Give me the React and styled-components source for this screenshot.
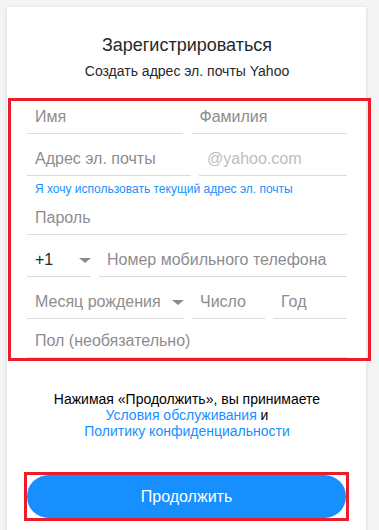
import styled, { createGlobalStyle } from "styled-components";

const GlobalStyle = createGlobalStyle`
  html, body {
    margin: 0;
    padding: 0;
    background: #f4f4f4;
    font-family: "Liberation Sans", Arial, sans-serif;
    overflow: hidden;
  }
`;

const Card = styled.div`
  box-sizing: border-box;
  margin: 7px 0 0 7px;
  width: 359px;
  min-height: 560px;
  padding: 27px 19px 0 20px;
  background: #fff;
  box-shadow: 0 1px 4px rgba(0, 0, 0, 0.13);
`;

const Title = styled.h1`
  margin: 0;
  font-size: 18px;
  line-height: 22px;
  font-weight: 400;
  color: #26282a;
  text-align: center;
`;

const Subtitle = styled.p`
  margin: 6px 0 0;
  font-size: 14px;
  line-height: 18px;
  color: #26282a;
  text-align: center;
`;

const Frame = styled.div`
  margin: 18px -24px 0 -19px;
  padding: 0 21px 0 16px;
  border: 3px solid #ec1c2b;
`;

const Row = styled.div`
  display: grid;
  grid-template-columns: ${(p) => p.$cols || "1fr"};
  column-gap: ${(p) => p.$gap || 8}px;
  margin-top: ${(p) => (p.$top == null ? 9 : p.$top)}px;
`;

const Field = styled.div`
  box-sizing: border-box;
  position: relative;
  height: 33px;
  padding: 0 8px;
  border-bottom: 1px solid #dcdcdc;
  font-size: 16px;
  line-height: 32px;
  white-space: nowrap;
  overflow: hidden;
  color: ${(p) => (p.$filled ? "#26282a" : "#8d8d8f")};
`;

const Suffix = styled.span`
  color: #b9bdc3;
`;

const Caret = styled.span`
  position: absolute;
  right: 0;
  top: 14px;
  border-left: 6px solid transparent;
  border-right: 6px solid transparent;
  border-top: 5px solid #8b8b8d;
`;

const Hint = styled.a`
  display: block;
  margin: 6px 0 0 8px;
  font-size: 12px;
  line-height: 14px;
  color: #188fff;
  text-decoration: none;
`;

const Terms = styled.p`
  margin: 30px 0 0;
  font-size: 14px;
  line-height: 16px;
  color: #000;
  text-align: center;
`;

const Link = styled.a`
  color: #188fff;
  text-decoration: none;
`;

const ButtonFrame = styled.div`
  width: 319px;
  margin: 33px 0 0 -3px;
  border: 3px solid #ec1c2b;
`;

const Button = styled.button`
  display: block;
  width: 100%;
  height: 43px;
  border: none;
  border-radius: 22px;
  background: #188fff;
  color: #fff;
  font-family: inherit;
  font-size: 16px;
  cursor: pointer;
`;

export default function App() {
  return (
    <>
      <GlobalStyle />
      <Card>
        <Title>Зарегистрироваться</Title>
        <Subtitle>Создать адрес эл. почты Yahoo</Subtitle>

        <Frame>
          <Row $cols="1fr 1fr" $gap={9} $top={0}>
            <Field>Имя</Field>
            <Field>Фамилия</Field>
          </Row>
          <Row $cols="164px 1fr" $gap={0}>
            <Field>Адрес эл. почты</Field>
            <Field><Suffix>@yahoo.com</Suffix></Field>
          </Row>
          <Hint href="#">Я хочу использовать текущий адрес эл. почты</Hint>
          <Row $top={6}>
            <Field>Пароль</Field>
          </Row>
          <Row $cols="64px 1fr">
            <Field $filled>+1<Caret /></Field>
            <Field>Номер мобильного телефона</Field>
          </Row>
          <Row $cols="157px 1fr 74px">
            <Field>Месяц рождения<Caret /></Field>
            <Field>Число</Field>
            <Field>Год</Field>
          </Row>
          <Row $top={6}>
            <Field>Пол (необязательно)</Field>
          </Row>
        </Frame>

        <Terms>
          Нажимая «Продолжить», вы принимаете
          <br />
          <Link href="#">Условия обслуживания</Link> и
          <br />
          <Link href="#">Политику конфиденциальности</Link>
        </Terms>

        <ButtonFrame>
          <Button>Продолжить</Button>
        </ButtonFrame>
      </Card>
    </>
  );
}
